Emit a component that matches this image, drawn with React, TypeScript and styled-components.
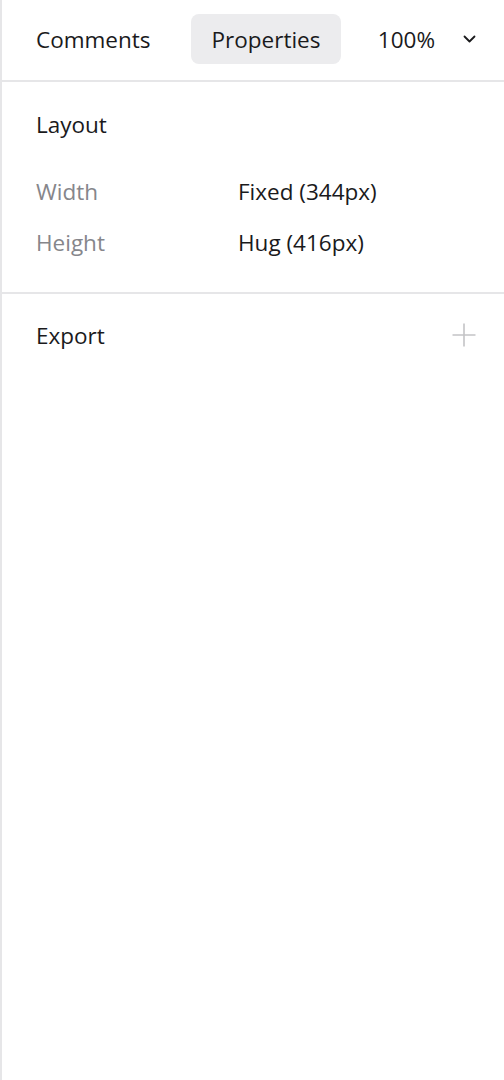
import styled, { createGlobalStyle } from 'styled-components';

const GlobalStyle = createGlobalStyle`
  html, body {
    margin: 0;
    padding: 0;
    background: #ffffff;
  }
  body {
    font-family: "Open Sans", "Noto Sans", sans-serif;
    color: #1a1a1c;
  }
`;

// --- Panel ---
const Panel = styled.aside`
  width: 504px;
  min-height: 1080px;
  box-sizing: border-box;
  border-left: 2px solid #e6e6e8;
  background: #ffffff;
`;

const TabBar = styled.div`
  display: flex;
  align-items: center;
  height: 82px;
  padding: 0 28px 2px 22px;
  border-bottom: 2px solid #e6e6e8;
  box-sizing: border-box;
  gap: 28px;
`;

const Tab = styled.button<{ $active?: boolean }>`
  height: 50px;
  padding: 0 ${({ $active }) => ($active ? '21px' : '12px')};
  border: none;
  border-radius: 8px;
  background: ${({ $active }) => ($active ? '#ececee' : 'transparent')};
  font-family: inherit;
  font-size: 22.5px;
  color: #1a1a1c;
  cursor: pointer;
`;

const Zoom = styled.button`
  margin-left: auto;
  display: flex;
  align-items: center;
  gap: 28px;
  border: none;
  background: none;
  font-family: inherit;
  font-size: 22.5px;
  color: #1a1a1c;
  padding: 0;
  cursor: pointer;
`;

const Section = styled.section<{ $divider?: boolean; $top: number }>`
  padding: ${({ $top }) => $top}px 28px 0 34px;
  border-bottom: ${({ $divider }) => ($divider ? '2px solid #e6e6e8' : 'none')};
`;

const SectionHead = styled.div`
  display: flex;
  align-items: center;
  justify-content: space-between;
  height: 44px;
`;

const SectionTitle = styled.h3`
  margin: 0;
  font-size: 22.5px;
  font-weight: 400;
  color: #1a1a1c;
`;

const PropList = styled.div`
  display: grid;
  grid-template-columns: 202px 1fr;
  padding: 20px 0 24px;
`;

const PropLabel = styled.div`
  height: 51px;
  line-height: 51px;
  font-size: 22.5px;
  color: #86868b;
`;

const PropValue = styled.div`
  height: 51px;
  line-height: 51px;
  font-size: 22.5px;
  color: #1a1a1c;
`;

const AddButton = styled.button`
  border: none;
  background: none;
  padding: 0;
  display: flex;
  cursor: pointer;
`;

const rows = [
  { label: 'Width', value: 'Fixed (344px)' },
  { label: 'Height', value: 'Hug (416px)' },
];

export default function App() {
  return (
    <>
      <GlobalStyle />
      <Panel>
        <TabBar>
          <Tab>Comments</Tab>
          <Tab $active>Properties</Tab>
          <Zoom>
            <span>100%</span>
            <svg width="13" height="8" viewBox="0 0 13 8" fill="none">
              <path d="M1.5 1.5 L6.5 6.5 L11.5 1.5" stroke="#1a1a1c" strokeWidth="1.8" strokeLinecap="round" strokeLinejoin="round" />
            </svg>
          </Zoom>
        </TabBar>

        <Section $divider $top={20}>
          <SectionHead>
            <SectionTitle>Layout</SectionTitle>
          </SectionHead>
          <PropList>
            {rows.map(r => [
              <PropLabel key={r.label + '-l'}>{r.label}</PropLabel>,
              <PropValue key={r.label + '-v'}>{r.value}</PropValue>,
            ])}
          </PropList>
        </Section>

        <Section $top={19}>
          <SectionHead>
            <SectionTitle>Export</SectionTitle>
            <AddButton aria-label="Add export">
              <svg width="24" height="24" viewBox="0 0 24 24" fill="none">
                <path d="M12 0.5 V23.5 M0.5 12 H23.5" stroke="#c4c4c6" strokeWidth="1.6" />
              </svg>
            </AddButton>
          </SectionHead>
        </Section>
      </Panel>
    </>
  );
}
